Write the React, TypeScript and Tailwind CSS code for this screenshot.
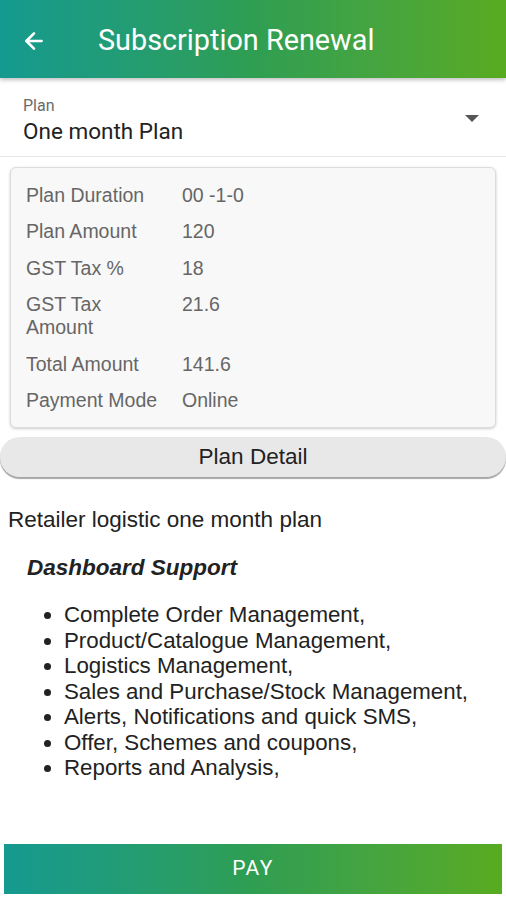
import { ArrowLeft } from "lucide-react";

const rows: { label: string; value: string }[] = [
  { label: "Plan Duration", value: "00 -1-0" },
  { label: "Plan Amount", value: "120" },
  { label: "GST Tax %", value: "18" },
  { label: "GST Tax Amount", value: "21.6" },
  { label: "Total Amount", value: "141.6" },
  { label: "Payment Mode", value: "Online" },
];

const features = [
  "Complete Order Management,",
  "Product/Catalogue Management,",
  "Logistics Management,",
  "Sales and Purchase/Stock Management,",
  "Alerts, Notifications and quick SMS,",
  "Offer, Schemes and coupons,",
  "Reports and Analysis,",
];

export default function App() {
  return (
    <div className="w-[506px] h-[900px] bg-white flex flex-col font-['Liberation_Sans',Arial,sans-serif] overflow-hidden">
      {/* Toolbar */}
      <div className="h-[78px] shrink-0 flex items-center pt-[3px] bg-gradient-to-r from-[#159a90] via-[#2f9e52] to-[#58ab1e] shadow-[0_2px_4px_rgba(0,0,0,0.25)] relative z-10">
        <ArrowLeft className="w-[26px] h-[26px] text-white ml-[21px]" strokeWidth={2.4} />
        <h1 className="ml-[51px] text-white text-[28.8px] font-['Roboto',sans-serif]">
          Subscription Renewal
        </h1>
      </div>

      {/* Plan select */}
      <div className="h-[79px] shrink-0 flex items-center border-b border-[#e6e6e6] pl-[23px] pr-[27px]">
        <div className="flex-1 flex flex-col font-['Roboto',sans-serif] pt-[7px]">
          <span className="text-[16px] leading-[18px] text-[#6b6b6b]">Plan</span>
          <span className="text-[22.5px] leading-[28px] text-[#222] mt-[2px]">One month Plan</span>
        </div>
        <svg width="14" height="7" viewBox="0 0 14 7" className="mt-[2px]">
          <path d="M0 0 L14 0 L7 7 Z" fill="#555" />
        </svg>
      </div>

      {/* Summary card */}
      <div className="mx-[10px] mt-[10px] rounded-[6px] border border-[#dcdcdc] bg-[#f8f8f8] shadow-[0_1px_3px_rgba(0,0,0,0.2)] pl-[15px] pt-[15.5px] pb-[15px] flex flex-col gap-[13.5px] text-[19.5px] leading-[23px] text-[#666]">
        {rows.map((r) => (
          <div key={r.label} className="flex">
            <span className="w-[156px] shrink-0 pr-[10px]">
              {r.label === "GST Tax Amount" ? (
                <>
                  GST Tax
                  <br />
                  Amount
                </>
              ) : (
                r.label
              )}
            </span>
            <span>{r.value}</span>
          </div>
        ))}
      </div>

      {/* Plan detail button */}
      <button className="mt-[9px] mx-0 h-[40px] shrink-0 rounded-full bg-[#e8e8e8] shadow-[0_2px_1px_rgba(0,0,0,0.35)] text-[22.5px] text-[#222] flex items-center justify-center">
        Plan Detail
      </button>

      {/* Description */}
      <div className="px-[8px] mt-[30px] text-[#222]">
        <p className="text-[22.5px] leading-[26px]">Retailer logistic one month plan</p>
        <p className="mt-[22px] ml-[19px] text-[22.5px] leading-[26px] font-bold italic">Dashboard Support</p>
        <ul className="mt-[21px] ml-[37px] text-[22.3px] leading-[25.5px] list-disc pl-[19px]">
          {features.map((f) => (
            <li key={f}>{f}</li>
          ))}
        </ul>
      </div>

      <div className="flex-1" />

      {/* Pay */}
      <button className="mx-[4px] mb-[6px] h-[50px] shrink-0 bg-gradient-to-r from-[#159a90] via-[#2f9e52] to-[#58ab1e] text-white text-[21px] tracking-[1.5px] font-['Roboto',sans-serif] flex items-center justify-center">
        PAY
      </button>
    </div>
  );
}
